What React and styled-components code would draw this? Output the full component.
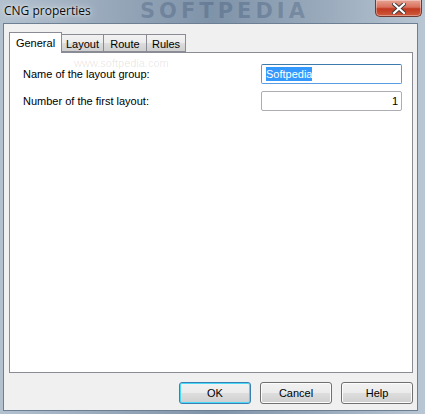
import React from "react";
import styled, { createGlobalStyle } from "styled-components";

const Global = createGlobalStyle`
  html, body { margin: 0; padding: 0; width: 425px; height: 414px; overflow: hidden; background: #9fb1c4; }
  * { box-sizing: border-box; }
`;

const Window = styled.div`
  position: relative;
  width: 425px;
  height: 414px;
  display: flex;
  flex-direction: column;
  background: linear-gradient(90deg, #b3c1cf 0%, #93a4b7 30%, #7f93a9 50%, #98a9bb 75%, #b9c6d3 100%);
  padding: 0 7px 3px 3px;
  font-family: "Liberation Sans", Arial, sans-serif;
`;

const TitleBar = styled.div`
  height: 23px;
  display: flex;
  align-items: center;
  padding-left: 1px;
  padding-bottom: 2px;
`;

const Title = styled.span`
  font-family: "Open Sans", "Liberation Sans", sans-serif;
  font-size: 12px;
  color: #0a0a0a;
  text-shadow: 0 0 8px rgba(255,255,255,0.9), 0 0 3px rgba(255,255,255,0.8);
  position: relative;
  z-index: 1;
`;

const Watermark = styled.span`
  position: absolute;
  left: 140px;
  top: 0;
  font-family: "DejaVu Sans", sans-serif;
  font-weight: bold;
  font-size: 21px;
  line-height: 23px;
  letter-spacing: 4px;
  color: rgba(45, 70, 105, 0.28);
  pointer-events: none;
`;

const CloseButton = styled.div`
  position: absolute;
  top: 0;
  right: 3px;
  width: 47px;
  height: 17px;
  border: 1px solid #6e3a34;
  border-top: none;
  border-radius: 0 0 5px 5px;
  background: linear-gradient(180deg, #e8a493 0%, #d8705c 45%, #c0391f 55%, #cf5a3d 100%);
  box-shadow: inset 0 0 0 1px rgba(255,255,255,0.35);
  display: flex;
  align-items: center;
  justify-content: center;
`;

const Client = styled.div`
  flex: 1;
  background: #f0f0f0;
  border: 1px solid #6d7f92;
  display: flex;
  flex-direction: column;
  padding: 8px 4px 6px 5px;
`;

const TabStrip = styled.div`
  display: flex;
  align-items: flex-end;
  height: 20px;
  position: relative;
  z-index: 1;
`;

const Tab = styled.div`
  height: ${p => (p.$active ? "21px" : "18px")};
  margin-bottom: ${p => (p.$active ? "-1px" : "0")};
  padding: 0 ${p => (p.$active ? "6px" : "4px")};
  padding-top: ${p => (p.$active ? "0" : "1px")};
  display: flex;
  align-items: center;
  justify-content: center;
  font-size: 11px;
  color: #000;
  border: 1px solid #898c95;
  border-bottom: ${p => (p.$active ? "none" : "1px solid #898c95")};
  margin-left: ${p => (p.$first ? "0" : "-1px")};
  background: ${p => (p.$active ? "#ffffff" : "linear-gradient(180deg, #f2f2f2 0%, #ebebeb 50%, #dddddd 51%, #cfcfcf 100%)")};
  width: ${p => p.$w}px;
  z-index: ${p => (p.$active ? 2 : 1)};
`;

const Panel = styled.div`
  flex: 1;
  background: #fff;
  border: 1px solid #898c95;
  padding: 11px 10px 0 13px;
  display: flex;
  flex-direction: column;
  gap: 7px;
`;

const Row = styled.div`
  display: flex;
  align-items: center;
  justify-content: space-between;
  height: 20px;
`;

const Label = styled.span`
  position: relative;
  font-size: 11px;
  color: #000;
`;

const SiteMark = styled.span`
  position: absolute;
  left: 51px;
  top: -11px;
  font-size: 11px;
  white-space: nowrap;
  color: rgba(0, 0, 0, 0.1);
  pointer-events: none;
`;

const Field = styled.div`
  width: 141px;
  height: 20px;
  border: 1px solid ${p => (p.$focus ? "#569de5" : "#abadb3")};
  border-top-color: ${p => (p.$focus ? "#3d7bad" : "#abadb3")};
  border-radius: 2px;
  background: #fff;
  display: flex;
  align-items: center;
  justify-content: ${p => (p.$right ? "flex-end" : "flex-start")};
  padding: 0 3px 0 4px;
  font-size: 11px;
  color: #000;
`;

const Selected = styled.span`
  background: #3399ff;
  color: #fff;
  padding: 1px 0;
  line-height: 12px;
`;

const ButtonRow = styled.div`
  display: flex;
  justify-content: flex-end;
  gap: 9px;
  padding-top: 9px;
`;

const Button = styled.div`
  width: 72px;
  height: 22px;
  border: 1px solid ${p => (p.$default ? "#3c7fb1" : "#707070")};
  border-radius: 3px;
  background: linear-gradient(180deg, #f2f2f2 0%, #ebebeb 50%, #dddddd 51%, #cfcfcf 100%);
  box-shadow: ${p => (p.$default ? "inset 0 0 0 1px #48d9f8" : "inset 0 0 0 1px #fcfcfc")};
  display: flex;
  align-items: center;
  justify-content: center;
  font-size: 11px;
  color: #000;
`;

export default function App() {
  return (
    <>
      <Global />
      <Window>
        <Watermark>SOFTPEDIA</Watermark>
        <TitleBar>
          <Title>CNG properties</Title>
        </TitleBar>
        <CloseButton>
          <svg width="14" height="11" viewBox="0 0 14 11">
            <path d="M2 1 L12 10 M12 1 L2 10" stroke="#3a3a3a" strokeWidth="4" strokeLinecap="square" />
            <path d="M2 1 L12 10 M12 1 L2 10" stroke="#ffffff" strokeWidth="2.2" strokeLinecap="square" />
          </svg>
        </CloseButton>
        <Client>
          <TabStrip>
            <Tab $active $first $w={53}>General</Tab>
            <Tab $w={43}>Layout</Tab>
            <Tab $w={44}>Route</Tab>
            <Tab $w={40}>Rules</Tab>
          </TabStrip>
          <Panel>
            <Row>
              <Label>
                <SiteMark>www.softpedia.com</SiteMark>
                Name of the layout group:
              </Label>
              <Field $focus>
                <Selected>Softpedia</Selected>
              </Field>
            </Row>
            <Row>
              <Label>Number of the first layout:</Label>
              <Field $right>1</Field>
            </Row>
          </Panel>
          <ButtonRow>
            <Button $default>OK</Button>
            <Button>Cancel</Button>
            <Button>Help</Button>
          </ButtonRow>
        </Client>
      </Window>
    </>
  );
}
